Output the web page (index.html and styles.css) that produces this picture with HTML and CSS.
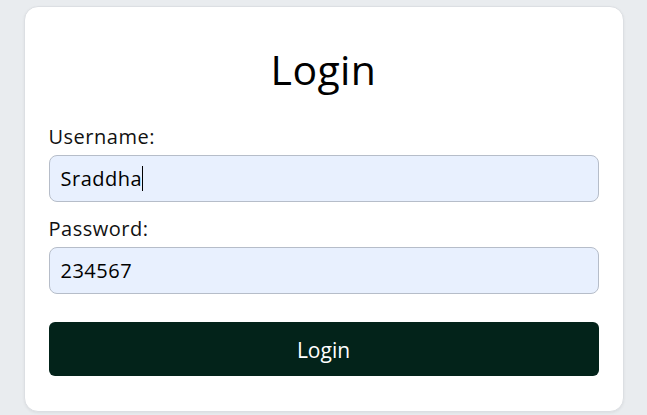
FILE: index.html
```html
<!DOCTYPE html>
<html>
<head>
<meta charset="utf-8">
<link rel="stylesheet" href="styles.css">
</head>
<body>
<div class="card">
  <h1 class="title">Login</h1>
  <form class="form">
    <label class="label" for="u">Username:</label>
    <div class="input"><span>Sraddha</span><span class="caret"></span></div>
    <label class="label" for="p">Password:</label>
    <div class="input"><span>234567</span></div>
    <button class="btn" type="button">Login</button>
  </form>
</div>
</body>
</html>
```

FILE: styles.css
```css
html, body {
  margin: 0;
  padding: 0;
}
body {
  background: #e9ecef;
  font-family: "Open Sans", sans-serif;
  color: #111;
  display: flex;
  justify-content: center;
  padding-top: 6px;
  height: 415px;
  box-sizing: border-box;
  overflow: hidden;
}
.card {
  width: 600px;
  height: 406px;
  box-sizing: border-box;
  background: #fff;
  border: 1px solid #dcdfe3;
  border-radius: 14px;
  padding: 24px 24px;
  box-shadow: 0 1px 3px rgba(0,0,0,0.06);
}
.title {
  margin: 14px 0 32px;
  text-align: center;
  font-weight: 400;
  font-size: 41px;
  line-height: 48px;
  letter-spacing: 0.4px;
  color: #000;
}
.form {
  display: flex;
  flex-direction: column;
}
.label {
  font-size: 20px;
  line-height: 24px;
  letter-spacing: 0.5px;
  margin-bottom: 6px;
  color: #111;
}
.input {
  height: 47px;
  box-sizing: border-box;
  background: #e8f0fe;
  border: 1px solid #b6bdc9;
  border-radius: 8px;
  display: flex;
  align-items: center;
  padding: 0 11px;
  font-size: 20px;
  letter-spacing: 0.5px;
  color: #000;
  margin-bottom: 15px;
}
.caret {
  display: inline-block;
  width: 1px;
  height: 25px;
  background: #000;
}
.btn {
  margin-top: 13px;
  height: 54px;
  padding-top: 3px;
  border: none;
  border-radius: 6px;
  background: #03231a;
  color: #fff;
  font-family: inherit;
  font-size: 21px;
}
```
